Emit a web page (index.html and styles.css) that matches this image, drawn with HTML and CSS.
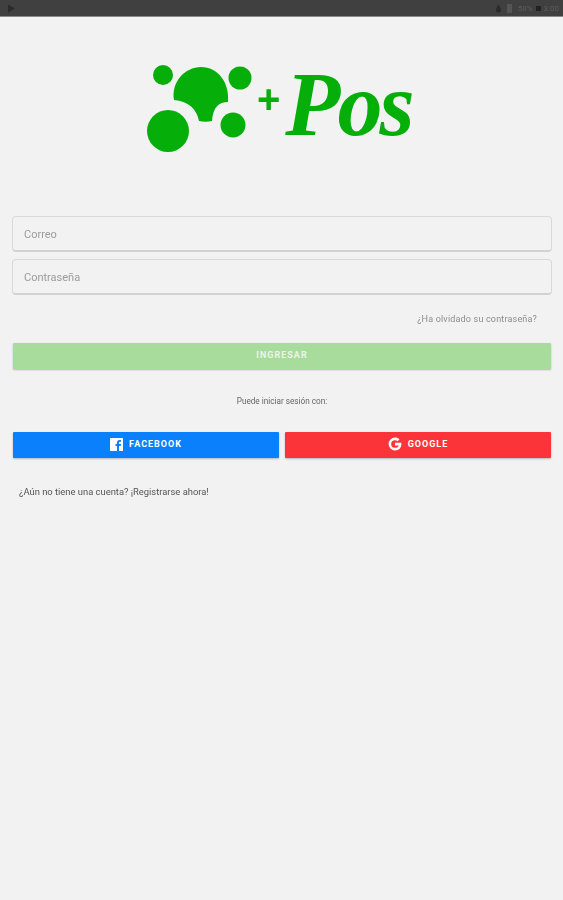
FILE: index.html
```html
<!DOCTYPE html>
<html lang="es">
<head>
    <meta charset="UTF-8">
    <meta name="viewport" content="width=device-width, initial-scale=1.0">
    <title>+Pos - Ingresar</title>
    <link rel="stylesheet" href="styles.css">
</head>
<body>
    <div class="status-bar">
        <svg class="status-play" width="9" height="9" viewBox="0 0 9 9"><path d="M1 0.500 L8 4.500 L1 8.500 Z" fill="#2b2b2b"/></svg>
        <div class="status-right">
            <svg width="5" height="9" viewBox="0 0 5 9"><path d="M2.500 0 C4 3 5 4.500 5 6 A2.500 2.500 0 0 1 0 6 C0 4.500 1 3 2.500 0 Z" fill="#2b2b2b"/></svg>
            <svg width="5" height="9" viewBox="0 0 5 9"><rect width="5" height="9" fill="#555"/></svg>
            <span>58%</span>
            <span class="status-battery"></span>
            <span>3:00</span>
        </div>
    </div>

    <div class="logo">
        <svg class="logo-mark" width="108" height="100" viewBox="0 0 108 100">
            <circle cx="16" cy="20" r="10"/>
            <circle cx="93" cy="23" r="11.500"/>
            <circle cx="21" cy="76" r="21"/>
            <circle cx="86" cy="70" r="12.500"/>
            <path d="M27 45 C24 27 38 12 54 12 C71 12 83 28 81 47 C72 47 66 52 65 66 C61 67 56 67 52 66 C50 55 42 46 27 45 Z"/>
        </svg>
        <span class="logo-plus">+</span>
        <span class="logo-name">Pos</span>
    </div>

    <form class="login">
        <div class="field">Correo</div>
        <div class="field">Contraseña</div>
        <a class="forgot" href="#">¿Ha olvidado su contraseña?</a>
        <button type="button" class="button button-login">INGRESAR</button>
        <p class="login-with">Puede iniciar sesión con:</p>
        <div class="social">
            <button type="button" class="button button-facebook">
                <svg width="13" height="13" viewBox="0 0 13 13">
                    <path d="M0.500 0 H12.500 A0.500 0.500 0 0 1 13 0.500 V12.500 A0.500 0.500 0 0 1 12.500 13 H9 V8 H10.700 L11 6 H9 V4.700 C9 4.100 9.300 3.800 10 3.800 H11 V2 H9.500 C7.800 2 7 3 7 4.500 V6 H5.500 V8 H7 V13 H0.500 A0.500 0.500 0 0 1 0 12.500 V0.500 A0.500 0.500 0 0 1 0.500 0 Z" fill="#fff"/>
                </svg>
                FACEBOOK
            </button>
            <button type="button" class="button button-google">
                <svg width="14" height="14" viewBox="0 0 24 24">
                    <path d="M12 10 V14.400 H18.600 C17.900 16.900 15.300 18.600 12 18.600 A6.600 6.600 0 0 1 12 5.400 C13.800 5.400 15.300 6 16.500 7.100 L19.700 3.900 C17.700 2 15 1 12 1 A11 11 0 0 0 12 23 C18.400 23 23 18.500 23 12 C23 11.300 22.900 10.600 22.800 10 Z" fill="#fff"/>
                </svg>
                GOOGLE
            </button>
        </div>
        <p class="register">¿Aún no tiene una cuenta? ¡Registrarse ahora!</p>
    </form>
</body>
</html>
```

FILE: styles.css
```css
body {
    font-family: Roboto, "Liberation Sans", sans-serif;
    background-color: #f2f2f2;
    margin: 0;
    padding: 0;
    height: 900px;
    overflow: hidden;
}

.status-bar {
    display: flex;
    justify-content: space-between;
    align-items: center;
    height: 16px;
    padding: 0 4px 0 7px;
    background-color: #414040;
    border-bottom: 1px solid #8a8a8a;
    filter: blur(0.6px);
}

.status-right {
    display: flex;
    align-items: center;
    gap: 6px;
    font-size: 8px;
    color: #5c5c5c;
}

.status-battery {
    width: 5px;
    height: 5px;
    margin: 0 -3px;
    background-color: #222;
}

.logo {
    display: flex;
    align-items: center;
    justify-content: center;
    height: 100px;
    margin-top: 36px;
    padding-right: 3px;
    color: #06ae0a;
    filter: blur(0.4px);
}

.logo-mark {
    fill: #06ae0a;
    margin-top: 4px;
}

.logo-plus {
    margin: 0 0 8px 2px;
    font-family: "Liberation Sans", sans-serif;
    font-size: 40px;
    font-weight: bold;
    line-height: 1;
}

.logo-name {
    margin: 2px 0 0 3.600px;
    font-family: "Liberation Serif", serif;
    font-size: 92px;
    font-style: italic;
    font-weight: bold;
    letter-spacing: -3px;
    line-height: 1;
    transform: scaleX(0.98);
}

.login {
    margin-top: 63px;
    padding: 0 11px 0 12px;
}

.field {
    display: flex;
    align-items: center;
    box-sizing: border-box;
    height: 36px;
    margin-bottom: 7px;
    padding: 2px 0 0 11px;
    border: 1px solid #d9d9d9;
    border-bottom: 2px solid #d2d2d2;
    border-radius: 4px;
    color: #9c9c9c;
    font-size: 11px;
    filter: blur(0.3px);
}

.forgot {
    display: block;
    margin-top: 18px;
    padding-right: 15px;
    color: #8d8d8d;
    font-size: 9px;
    letter-spacing: 0.18px;
    line-height: 13px;
    text-align: right;
    text-decoration: none;
    filter: blur(0.3px);
}

.button {
    display: flex;
    align-items: center;
    justify-content: center;
    gap: 6px;
    box-sizing: border-box;
    height: 26px;
    margin: 0;
    padding: 0 0 2px;
    border: 0;
    border-radius: 1px;
    box-shadow: 0 1px 2px rgba(0, 0, 0, 0.25);
    color: #ffffff;
    font-family: inherit;
    font-size: 9px;
    font-weight: bold;
    letter-spacing: 1px;
}

.button-login {
    width: 538px;
    margin: 17px 0 0 1px;
    background-color: #a8dc9c;
    color: #e8f5e4;
}

.login-with {
    margin: 27px 0 0;
    color: #666;
    font-size: 8.200px;
    line-height: 11px;
    text-align: center;
    filter: blur(0.2px);
}

.social {
    display: flex;
    gap: 6px;
    margin: 25px 0 0 1px;
}

.social .button {
    width: 266px;
}

.button-facebook {
    background-color: #0a80fd;
}

.button-google {
    background-color: #fb3439;
}

.register {
    margin: 27px 0 0 7px;
    color: #555;
    font-size: 9.400px;
    line-height: 13px;
    filter: blur(0.2px);
}
```
